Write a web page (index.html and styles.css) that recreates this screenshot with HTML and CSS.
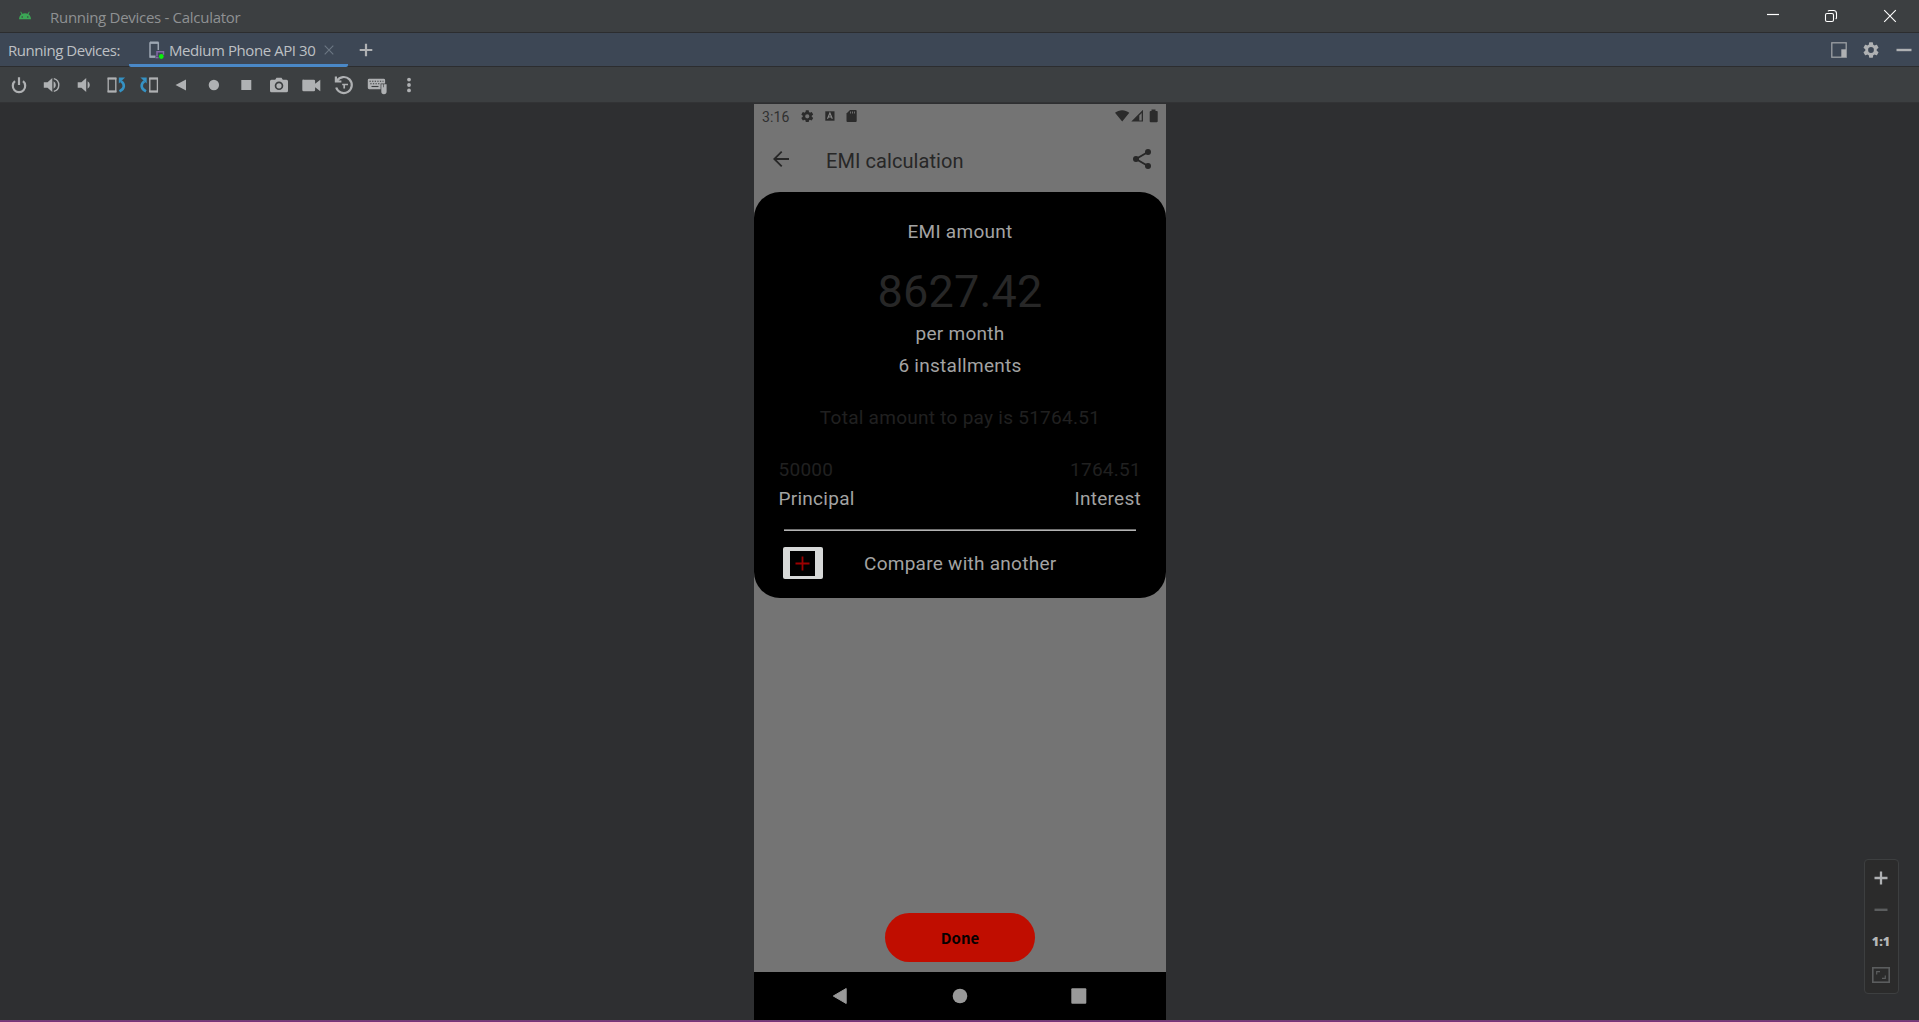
FILE: index.html
```html
<!DOCTYPE html>
<html lang="en">
<head>
<meta charset="utf-8">
<title>Running Devices - Calculator</title>
<link rel="stylesheet" href="styles.css">
</head>
<body>
<div class="window">
  <header class="titlebar">
    <svg class="android" width="14" height="10" viewBox="0 0 14 10"><path fill="#3ba755" d="M1 8.3C1.200 5.600 2.300 4.200 3.500 3.300L2.300 1 3 .6 4.300 2.800C6 2.100 8 2.100 9.700 2.800L11 .6 11.700 1 10.500 3.300C11.900 4.300 12.900 5.800 13 8.300Z"/><circle cx="4.200" cy="6" r=".8" fill="#3c3f41"/><circle cx="9.800" cy="6" r=".8" fill="#3c3f41"/></svg>
    <span class="title">Running Devices - Calculator</span>
    <div class="controls">
      <svg width="14" height="14" viewBox="0 0 14 14"><path d="M1 5.500h12" stroke="#fff" stroke-width="1.200"/></svg>
      <svg width="14" height="14" viewBox="0 0 14 14" fill="none" stroke="#fff" stroke-width="1.100"><rect x="1.500" y="4.500" width="8" height="8" rx="1.500"/><path d="M4 2.300Q4.500 1.500 5.500 1.500H9.500Q12.500 1.500 12.500 4.500V8.500Q12.500 9.500 11.700 10"/></svg>
      <svg width="14" height="14" viewBox="0 0 14 14"><path d="M1.200 1.200l11.600 11.600M12.800 1.200L1.200 12.800" stroke="#fff" stroke-width="1.100"/></svg>
    </div>
  </header>

  <nav class="tabs">
    <span class="tabs-label">Running Devices:</span>
    <div class="tab">
      <svg class="tab-icon" width="18" height="20" viewBox="0 0 18 20"><path d="M10.300 9V2H2v14h5" fill="none" stroke="#9da7b3" stroke-width="1.500"/><path d="M2 1.600h8.500M2 15.500h5.500" stroke="#9da7b3" stroke-width="2"/><path d="M9 15.500v-4.700h6.500v3" fill="none" stroke="#8568a8" stroke-width="1.500"/><path d="M7.500 16.700h3" stroke="#8568a8" stroke-width="1.300"/><circle cx="13.300" cy="15.500" r="2.400" fill="#0bf00b"/></svg>
      <span class="tab-name">Medium Phone API 30</span>
      <svg class="tab-close" width="10" height="10" viewBox="0 0 10 10"><path d="M.7.7l8.600 8.600M9.300.7L.7 9.300" stroke="#6c7783" stroke-width="1.100"/></svg>
    </div>
    <svg class="tab-add" width="14" height="14" viewBox="0 0 14 14"><path d="M7 .7v12.600M.7 7h12.600" stroke="#afb1b3" stroke-width="2.200"/></svg>
    <div class="tab-tools">
      <svg width="16" height="16" viewBox="0 0 16 16"><rect x=".8" y=".8" width="14.400" height="14.400" fill="none" stroke="#9da1a5" stroke-width="1.300"/><path d="M10.300 7.300H15V15h-4.700z" fill="#afb1b3"/></svg>
      <svg width="16" height="16" viewBox="2 2 20 20"><path fill="#afb1b3" fill-rule="evenodd" d="M19.140 12.940a7.070 7.070 0 0 0 0-1.880l2.030-1.580a.5.5 0 0 0 .12-.61l-1.920-3.320a.49.49 0 0 0-.59-.22l-2.390.96a7 7 0 0 0-1.620-.94L14.400 2.810a.48.48 0 0 0-.48-.41h-3.840a.47.47 0 0 0-.47.410L9.250 5.350a7.300 7.300 0 0 0-1.620.94l-2.390-.96a.48.48 0 0 0-.59.22L2.740 8.870a.47.47 0 0 0 .12.610l2.030 1.580a7.300 7.300 0 0 0 0 1.880l-2.030 1.580a.5.5 0 0 0-.12.610l1.920 3.320c.12.220.37.290.59.220l2.390-.96c.5.380 1.030.7 1.620.94l.36 2.540c.05.240.24.410.48.410h3.840c.24 0 .44-.17.47-.41l.36-2.540a7 7 0 0 0 1.620-.94l2.390.96c.22.080.47 0 .59-.22l1.920-3.320a.47.47 0 0 0-.12-.61zM12 15.600a3.600 3.600 0 1 1 0-7.200 3.600 3.600 0 0 1 0 7.200z"/></svg>
      <svg width="16" height="16" viewBox="0 0 16 16"><path d="M.5 8h15" stroke="#afb1b3" stroke-width="2.400"/></svg>
    </div>
  </nav>

  <div class="toolbar">
    <svg viewBox="0 0 24 24"><path d="M8 8.200a6.200 6.200 0 1 0 8 0M12 4.300V12" fill="none" stroke="#afb1b3" stroke-width="2.200"/></svg>
    <svg viewBox="0 0 24 24"><path d="M3.800 9.200h3.700L12.300 5v14l-4.800-4.200H3.800zM13.600 8.300a4.200 4.200 0 0 1 0 7.400z" fill="#afb1b3"/><path d="M13.800 5.600a6.600 6.600 0 0 1 0 12.800" fill="none" stroke="#afb1b3" stroke-width="1.400"/></svg>
    <svg viewBox="0 0 24 24"><path d="M5.700 9.200h3.700L14.200 5v14l-4.800-4.200H5.700zM15.600 8.300a4.200 4.200 0 0 1 0 7.400z" fill="#afb1b3"/></svg>
    <svg viewBox="0 0 24 24"><path d="M3.200 5.500h7.600v13H3.200z" fill="none" stroke="#afb1b3" stroke-width="1.300"/><path d="M2.600 5.600h8.800M2.600 18.400h8.800" stroke="#afb1b3" stroke-width="2"/><path d="M16 8.200C20 11 20 15.500 14.500 18.400" fill="none" stroke="#3592c4" stroke-width="2.600"/><path d="M13.800 4.500h6.300l-6.300 6z" fill="#3592c4"/></svg>
    <svg viewBox="0 0 24 24"><path d="M12.800 5.500h7.600v13h-7.600z" fill="none" stroke="#afb1b3" stroke-width="1.300"/><path d="M12.200 5.600H21M12.200 18.400H21" stroke="#afb1b3" stroke-width="2"/><path d="M7.500 8.200C3.500 11 3.500 15.500 9 18.400" fill="none" stroke="#3592c4" stroke-width="2.600"/><path d="M9.700 4.500H3.400l6.300 6z" fill="#3592c4"/></svg>
    <svg viewBox="0 0 24 24"><path d="M16 6.600v10.800L5.500 12z" fill="#afb1b3"/></svg>
    <svg viewBox="0 0 24 24"><circle cx="11.900" cy="12" r="5.200" fill="#afb1b3"/></svg>
    <svg viewBox="0 0 24 24"><path d="M6.300 7h10v10h-10z" fill="#afb1b3"/></svg>
    <svg viewBox="0 0 24 24"><path fill="#afb1b3" fill-rule="evenodd" d="M4.500 6.700h3.700l1.300-2h5l1.300 2h3.700A1.500 1.500 0 0 1 21 8.200v9.600a1.500 1.500 0 0 1-1.500 1.500h-15A1.500 1.500 0 0 1 3 17.800V8.200a1.500 1.500 0 0 1 1.500-1.500zM12 8.500a4.300 4.300 0 1 0 0 8.600 4.300 4.300 0 0 0 0-8.600z"/><circle cx="12" cy="12.800" r="2.600" fill="#afb1b3"/></svg>
    <svg viewBox="0 0 24 24"><path fill="#afb1b3" d="M4 6.700h9.800a1.300 1.300 0 0 1 1.300 1.300v2.800l5.200-4v11.400l-5.200-4v2.800a1.300 1.300 0 0 1-1.300 1.300H4A1.500 1.500 0 0 1 2.300 16.800V8A1.300 1.300 0 0 1 4 6.700z"/></svg>
    <svg viewBox="0 0 24 24" fill="none" stroke="#afb1b3" stroke-width="2.200"><path d="M5 7.800A8 8 0 1 1 4.200 14.500"/><path d="M3.900 3.500v5h5.500"/><path d="M10.200 11.500H16M12.200 11.500v4" stroke-width="1.700"/></svg>
    <svg viewBox="0 0 24 24"><path fill="#afb1b3" d="M4.200 5.700h14.500a1.400 1.400 0 0 1 1.400 1.400v3.300h-4.500v5.800H4.200a1.400 1.400 0 0 1-1.400-1.400V7.100a1.400 1.400 0 0 1 1.400-1.400z"/><path d="M4.500 8.200h14M5.300 10.700h10" stroke="#3c3f41" stroke-width="1.100" stroke-dasharray="1.300 1.300"/><path d="M6.500 13.500h7" stroke="#3c3f41" stroke-width="1.100"/><path fill="#afb1b3" d="M16.300 11.300h2v3h.6v-3h2.700v7.200a2.600 2.600 0 0 1-5.300 0z"/></svg>
    <svg viewBox="0 0 24 24" fill="#afb1b3"><circle cx="12" cy="6.600" r="1.900"/><circle cx="12" cy="12" r="1.900"/><circle cx="12" cy="17.400" r="1.900"/></svg>
  </div>

  <main class="stage">
    <section class="phone">
      <div class="status">
        <span class="clock">3:16</span>
        <svg width="12.500" height="12.500" viewBox="2 2 20 20"><path fill="#2b2b2b" fill-rule="evenodd" d="M19.140 12.940a7.070 7.070 0 0 0 0-1.880l2.030-1.580a.5.5 0 0 0 .12-.61l-1.920-3.320a.49.49 0 0 0-.59-.22l-2.390.96a7 7 0 0 0-1.620-.94L14.400 2.810a.48.48 0 0 0-.48-.41h-3.840a.47.47 0 0 0-.47.410L9.250 5.350a7.300 7.300 0 0 0-1.620.94l-2.390-.96a.48.48 0 0 0-.59.22L2.740 8.870a.47.47 0 0 0 .12.610l2.030 1.580a7.300 7.300 0 0 0 0 1.880l-2.030 1.580a.5.5 0 0 0-.12.610l1.920 3.320c.12.220.37.290.59.220l2.390-.96c.5.380 1.030.7 1.620.94l.36 2.540c.05.240.24.410.48.410h3.840c.24 0 .44-.17.47-.41l.36-2.540a7 7 0 0 0 1.620-.94l2.390.96c.22.080.47 0 .59-.22l1.920-3.320a.47.47 0 0 0-.12-.61zM12 15.400a3.400 3.400 0 1 1 0-6.800 3.400 3.400 0 0 1 0 6.800z"/></svg>
        <svg class="a-icon" width="10" height="10" viewBox="0 0 10 10"><path d="M.3.300h9.200v9.400H.3z" fill="#2b2b2b"/><path d="M2.500 7.700L4.900 2l2.400 5.700M3.300 6h3.200" fill="none" stroke="#8a8a8a" stroke-width="1.100"/></svg>
        <svg class="sd-icon" width="11" height="12" viewBox="0 0 11 12"><path d="M4 0h5.700a1 1 0 0 1 1 1v10a1 1 0 0 1-1 1H1.500a1 1 0 0 1-1-1V3.600z" fill="#2b2b2b"/><path d="M4.500 1.500v2M6.500 1.500v2M8.500 1.500v2" stroke="#747474" stroke-width=".9"/></svg>
        <svg class="signals" width="44" height="14" viewBox="0 0 44 14"><path fill="#2b2b2b" d="M0 3.700C4.300.3 10 .3 14.300 3.700L7.200 12.600zM16.300 12.600L28 .8v11.800zM36.500 2V.5h4V2H42a1 1 0 0 1 .7 1v9.300a1 1 0 0 1-1 1h-6a1 1 0 0 1-1-1V3a1 1 0 0 1 1-1z"/><path d="M24.300 6.500L26.700 4v7.400h-2.400z" fill="#747474"/></svg>
      </div>
      <div class="appbar">
        <svg width="18" height="18" viewBox="0 0 18 18"><path d="M9.700 1.700L2.300 9l7.400 7.300M2.500 9H17" fill="none" stroke="#272727" stroke-width="1.800"/></svg>
        <h1>EMI calculation</h1>
        <svg class="share" width="20" height="22" viewBox="0 0 20 22"><path d="M16 4L4 11l12 7" fill="none" stroke="#272727" stroke-width="1.900"/><g fill="#272727"><circle cx="16" cy="4" r="3"/><circle cx="4" cy="11" r="3"/><circle cx="16" cy="18" r="3"/></g></svg>
      </div>
      <article class="card">
        <p class="caption">EMI amount</p>
        <p class="amount">8627.42</p>
        <p class="per">per month</p>
        <p class="count">6 installments</p>
        <p class="total">Total amount to pay is 51764.51</p>
        <div class="split">
          <div><p class="dim">50000</p><p>Principal</p></div>
          <div class="right"><p class="dim">1764.51</p><p>Interest</p></div>
        </div>
        <div class="rule"></div>
        <div class="compare">
          <span class="plus-btn"><svg width="25" height="25" viewBox="0 0 25 25"><path d="M0 0h25v25H0z"/><path d="M12.500 5.500v14M5.500 12.500h14" stroke="#9c0000" stroke-width="1.800"/></svg></span>
          <span>Compare with another</span>
        </div>
      </article>
      <button class="done">Done</button>
      <div class="navbar">
        <svg width="16" height="18" viewBox="0 0 16 18"><path d="M14.200 1.500v15L1.300 9z" fill="#999" stroke="#999" stroke-linejoin="round"/></svg>
        <svg width="16" height="16" viewBox="0 0 16 16"><circle cx="8" cy="8" r="7.300" fill="#999"/></svg>
        <svg width="16" height="16" viewBox="0 0 16 16"><rect x=".3" y=".3" width="15" height="15.500" rx="1" fill="#999"/></svg>
      </div>
    </section>
    <div class="zoom">
      <svg width="14" height="14" viewBox="0 0 14 14"><path d="M7 .5v13M.5 7h13" stroke="#afb1b3" stroke-width="2.300"/></svg>
      <svg width="14" height="14" viewBox="0 0 14 14"><path d="M.5 7.800h13" stroke="#5b5d5e" stroke-width="2.400"/></svg>
      <span>1:1</span>
      <svg width="18" height="16" viewBox="0 0 18 16" fill="none" stroke="#5b5d5e"><rect x=".8" y=".8" width="16.400" height="14.400" stroke-width="1.600"/><path d="M4.700 7.500V4.700H8M13.300 8.500v2.800H10" stroke-width="1.200"/></svg>
    </div>
  </main>
  <div class="taskline"></div>
</div>
</body>
</html>
```

FILE: styles.css
```css
* { box-sizing: border-box; margin: 0; padding: 0; }
body { background: #2e2f31; font-family: "Open Sans", "Noto Sans", sans-serif; overflow: hidden; }
svg { display: block; flex: none; }
.window { height: 1022px; display: flex; flex-direction: column; }

.titlebar { height: 33px; background: #3c3f41; border-bottom: 1px solid #2c2d2f; display: flex; align-items: center; padding: 0 22px 0 18px; }
.title { margin: 1px 0 0 18px; font-size: 15px; letter-spacing: -.29px; color: #8f9193; white-space: nowrap; }
.controls { margin-left: auto; display: flex; gap: 45px; }
.controls svg:first-child { margin-right: -1px; }

.tabs { height: 34px; background: #3d4755; border-bottom: 1px solid #2c2d2f; display: flex; align-items: center; padding: 0 7px 0 8px; color: #bdc0c4; font-size: 15px; white-space: nowrap; }
.tabs-label { width: 121px; letter-spacing: -.45px; padding-top: 1px; }
.tab { width: 219px; height: 34px; display: flex; align-items: center; padding: 3px 14px 0 19px; border-bottom: 3px solid #4a88c7; border-radius: 0 0 2px 2px; }
.tab-icon { margin-top: 2px; }
.tab-name { margin-left: 3px; letter-spacing: -.42px; padding-top: 1px; }
.tab-close { margin-left: auto; margin-top: 1px; }
.tab-add { margin-left: 11px; }
.tab-tools { margin-left: auto; display: flex; gap: 17px; }
.tab-tools svg:first-child { margin-right: -1px; }

.toolbar { height: 36px; background: #3c3f41; border-bottom: 1px solid #323335; display: flex; gap: 8.500px; padding: 6px 0 0 7px; }
.toolbar svg { width: 24px; height: 24px; }

.stage { flex: 1; display: grid; grid-template-columns: 754px 412px 1fr; padding-top: 1px; }
.phone { grid-column: 2; background: #747474; display: flex; flex-direction: column; align-items: center; font-family: Roboto, sans-serif; }
.status { width: 100%; height: 26px; display: flex; align-items: center; padding: 0 7px 2px 8px; }
.clock { width: 39px; font-size: 14px; color: #303030; letter-spacing: .1px; padding-top: 1px; }
.a-icon { margin-left: 11px; }
.sd-icon { margin-left: 11.500px; }
.signals { margin-left: auto; }
.appbar { width: 100%; height: 62px; display: flex; align-items: center; padding: 0 14px 4px 18px; }
.appbar h1 { font-size: 20px; font-weight: 400; color: #272727; margin: 4px 0 0 36px; letter-spacing: .07px; }
.share { margin-left: auto; }

.card { width: 412px; height: 406px; background: #000; border-radius: 26px; color: #a3a3a3; font-size: 19px; line-height: 22px; letter-spacing: .27px; text-align: center; }
.caption { padding-top: 29px; }
.amount { font-size: 45px; line-height: 54px; color: #272727; margin-top: 22px; letter-spacing: .2px; }
.per { margin-top: 4px; }
.count { margin-top: 10px; }
.total { margin-top: 30px; color: #202020; }
.split { display: flex; justify-content: space-between; padding: 30px 25px 0 24.500px; text-align: left; }
.split .right { text-align: right; }
.dim { color: #202020; margin-bottom: 7px; }
.rule { height: 2px; background: linear-gradient(#6f6f6f 50%, #b4b4b4 50%); margin: 19px 30px 0; }
.compare { display: flex; align-items: center; margin: 16px 0 0 29px; gap: 41px; }
.compare > span:last-child { padding-top: 1px; }
.plus-btn { width: 40px; height: 32px; background: #d6d8d7; border-radius: 2px; display: flex; align-items: center; padding-left: 7px; }

.done { margin-top: auto; width: 150px; height: 49px; border: 0; border-radius: 25px; padding-bottom: 1px; background: #c00d00; color: #080000; font: 700 15px "Noto Sans CJK SC", sans-serif; }
.navbar { width: 100%; height: 48px; margin-top: 10px; background: #000; display: flex; align-items: center; justify-content: space-between; padding: 0 79px 0 78px; }

.zoom { grid-column: 3; justify-self: end; align-self: end; width: 35px; height: 135px; margin: 0 20px 26px 0; border: 1px solid #3d3f40; border-radius: 4px; background: #2b2b2b; display: flex; flex-direction: column; align-items: center; justify-content: space-between; padding: 11px 1px 10px 0; }
.zoom span { font: 800 12.500px/16px "Open Sans", sans-serif; color: #b5b7b8; padding-top: 2px; }
.taskline { height: 2px; background: linear-gradient(#704473, #7b2d7c); }
```
